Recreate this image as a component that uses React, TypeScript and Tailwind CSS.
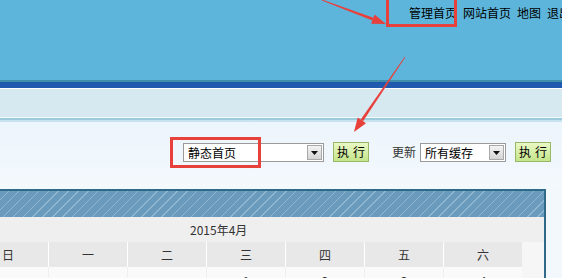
import React from "react";

const font = { fontFamily: '"Noto Sans CJK SC", "Liberation Sans", sans-serif' };

type Pt = [number, number];

// tapered arrow: thin tail, filled head at the tip
function arrowPoints(s: Pt, t: Pt) {
  const dx = t[0] - s[0];
  const dy = t[1] - s[1];
  const len = Math.hypot(dx, dy);
  const u: Pt = [dx / len, dy / len];
  const n: Pt = [-u[1], u[0]];
  const b: Pt = [t[0] - 14 * u[0], t[1] - 14 * u[1]];
  const p = (base: Pt, k: number): string =>
    `${(base[0] + k * n[0]).toFixed(1)},${(base[1] + k * n[1]).toFixed(1)}`;
  const shaft = [p(s, 0.4), p(b, 1.4), p(b, -1.4), p(s, -0.4)].join(" ");
  const head = [p(b, 5), `${t[0]},${t[1]}`, p(b, -5)].join(" ");
  return { shaft, head };
}

function Arrow({ from, to }: { from: Pt; to: Pt }) {
  const { shaft, head } = arrowPoints(from, to);
  return (
    <g fill="#e8403a">
      <polygon points={shaft} />
      <polygon points={head} />
    </g>
  );
}

function Select({ value, width }: { value: string; width: string }) {
  return (
    <div className={`flex h-[19px] items-center border border-[#9a9a9a] bg-white ${width}`}>
      <span className="flex-1 pl-[4px] text-[12px] leading-[17px] text-black">{value}</span>
      <div className="mr-[1px] flex h-[15px] w-[15px] items-center justify-center border border-[#a8a8a8] bg-gradient-to-b from-[#f4f4f4] to-[#d4d4d4]">
        <svg width="7" height="4" viewBox="0 0 7 4">
          <polygon points="0,0 7,0 3.5,4" fill="#111" />
        </svg>
      </div>
    </div>
  );
}

function RunButton() {
  return (
    <button className="flex h-[20px] w-[36px] items-center justify-center whitespace-nowrap border border-[#97b868] bg-gradient-to-b from-[#eaf8c4] to-[#c4e58a] text-[12px] leading-[18px] text-black">
      <span>执</span>
      <span className="ml-[4px]">行</span>
    </button>
  );
}

const weekdays = ["日", "一", "二", "三", "四", "五", "六"];
const dates = ["", "", "", "1", "2", "3", "4"];

export default function App() {
  return (
    <div className="relative h-[278px] w-[562px] overflow-hidden bg-[#f3f8fc]" style={font}>
      {/* header */}
      <div className="h-[80px] bg-[#5db5dc]">
        <div className="flex gap-[6px] whitespace-nowrap pl-[409px] pt-[5px] text-[12px] leading-[16px] text-black">
          <span>管理首页</span>
          <span>网站首页</span>
          <span>地图</span>
          <span>退出</span>
        </div>
      </div>
      <div className="h-[2px] bg-[#3f8fab]" />
      <div className="h-[6px] bg-[#1f5aae]" />
      <div className="h-[1px] bg-white" />
      <div className="h-[28px] bg-[#d6e9f1]" />
      <div className="h-[1px] bg-[#f2f9fc]" />
      <div className="h-[2px] bg-[#9ccbdc]" />
      <div className="h-[2px] bg-[#c6e3ef]" />

      {/* toolbar */}
      <div className="flex h-[67px] items-start bg-gradient-to-b from-[#ecf5fc] to-[#f4f9fd] pt-[20px]">
        <div className="ml-[183px] mt-[1px]">
          <Select value="静态首页" width="w-[141px]" />
        </div>
        <div className="ml-[9px]">
          <RunButton />
        </div>
        <span className="ml-[23px] mt-[2px] text-[12px] leading-[16px] text-[#333]">更新</span>
        <div className="ml-[4px] mt-[1px]">
          <Select value="所有缓存" width="w-[86px]" />
        </div>
        <div className="ml-[9px]">
          <RunButton />
        </div>
      </div>

      {/* calendar */}
      <div className="w-[546px] border-r-2 border-t-2 border-[#2f6a8a] bg-[#f6f6f6]">
        <div className="h-[26px] bg-[repeating-linear-gradient(135deg,#6a9bbd_0px,#6a9bbd_6px,#8fb7d2_6px,#8fb7d2_7px)]" />
        <div className="h-[25px] bg-[#efefef] pl-[190px] text-[12px] leading-[25px] text-[#333]">2015年4月</div>
        <div className="flex h-[25px] text-[12px] text-[#333]">
          {weekdays.map((d, i) => (
            <div
              key={d}
              className={`flex items-center bg-[#e8e8e8] ${
                i === 0 ? "w-[48px] pl-[2px]" : "w-[79px] justify-center border-l border-white"
              }`}
            >
              {d}
            </div>
          ))}
        </div>
        <div className="flex h-[30px] text-[12px] text-[#333]">
          {dates.map((d, i) => (
            <div
              key={i}
              className={`flex justify-center bg-[#fafafa] pt-[5px] ${
                i === 0 ? "w-[48px]" : "w-[79px] border-l border-[#f0f0f0]"
              }`}
            >
              {d}
            </div>
          ))}
        </div>
      </div>

      {/* annotations */}
      <div className="absolute left-[386px] top-[-4px] h-[31px] w-[71px] border-[3px] border-[#e8413c]" />
      <div className="absolute left-[170px] top-[137px] h-[31px] w-[91px] border-[3px] border-[#e8413c]" />
      <svg className="absolute left-0 top-0" width="562" height="278">
        <Arrow from={[322, 0]} to={[386, 24]} />
        <Arrow from={[405, 57]} to={[354, 132]} />
      </svg>
    </div>
  );
}
